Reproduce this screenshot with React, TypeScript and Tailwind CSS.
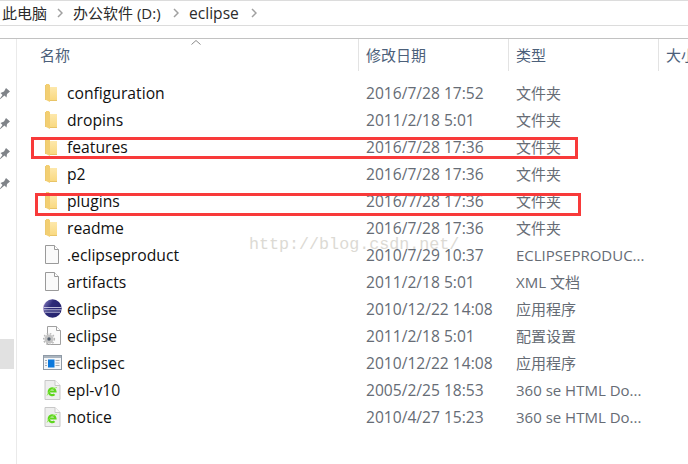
import type { ReactNode } from 'react';

const FONT = "font-['Open_Sans','Noto_Sans_CJK_SC',sans-serif]";

function Folder() {
  return (
    <svg width="14" height="18" viewBox="0 0 14 18">
      <defs>
        <linearGradient id="fold" x1="0" y1="0" x2="0" y2="1">
          <stop offset="0" stopColor="#fde8ac" />
          <stop offset="1" stopColor="#f9d981" />
        </linearGradient>
      </defs>
      <path d="M0 1h5v15H0z" fill="#ecc96f" />
      <path d="M1 0h3l1 2v16l-4-2z" fill="#f3cf72" />
      <path d="M5 3h7v13H5z" fill="url(#fold)" />
      <path d="M5 16.500h7" stroke="#e8c468" />
    </svg>
  );
}

function PlainFile() {
  return (
    <svg width="16" height="19" viewBox="0 0 16 19">
      <path d="M1.500.5h9l4 4v14h-13z" fill="#fafafa" stroke="#9a9a9a" />
      <path d="M10.500.5v4h4" fill="#fff" stroke="#9a9a9a" />
    </svg>
  );
}

function EclipseLogo() {
  return (
    <svg width="19" height="19" viewBox="0 0 19 19">
      <defs>
        <linearGradient id="ecl" x1="0" y1="0" x2="1" y2="0.600">
          <stop offset="0" stopColor="#8f88c8" />
          <stop offset="0.450" stopColor="#2c2a78" />
          <stop offset="1" stopColor="#26246e" />
        </linearGradient>
      </defs>
      <circle cx="9.500" cy="9.500" r="9.200" fill="url(#ecl)" />
      <path d="M1 8.500h17.500M1 10.800h17.500M2 13.200h15" stroke="#dfe0f2" strokeWidth="0.800" />
      <path d="M3 2.800a9.200 9.200 0 0 0 0 13.400a11 11 0 0 1 0-13.400z" fill="#c9a9d8" opacity="0.800" />
    </svg>
  );
}

function ConfigFile() {
  return (
    <svg width="19" height="19" viewBox="0 0 19 19">
      <path d="M4.500.5h9l4 4v14h-13z" fill="#fbfbfb" stroke="#a0a0a0" />
      <path d="M13.500.5v4h4" fill="#fff" stroke="#a0a0a0" />
      <circle cx="6" cy="13" r="4.600" fill="#c4c4c4" />
      <circle cx="6" cy="13" r="5.400" fill="none" stroke="#b5b5b5" strokeWidth="1.400" strokeDasharray="1.600 1.600" />
      <circle cx="6" cy="13" r="1.700" fill="#55606e" />
    </svg>
  );
}

function ExeFile() {
  return (
    <svg width="19" height="16" viewBox="0 0 19 16">
      <rect x="0.500" y="0.500" width="18" height="14" fill="#f4f6f8" stroke="#8f9aa6" />
      <path d="M1 1h17v2H1z" fill="#aab4be" />
      <path d="M5 4.500h6.500v8H5z" fill="#0a78dc" />
      <path d="M12.500 5.500h4M12.500 8h4M12.500 10.500h4M2 5.500h2M2 8h2M2 10.500h2" stroke="#a2a9b2" />
    </svg>
  );
}

function HtmlFile() {
  return (
    <svg width="17" height="20" viewBox="0 0 17 20">
      <path d="M1 .5h10l5 5v14H1z" fill="#eeeeee" stroke="#c8c8c8" />
      <path d="M11 .5v5h5" fill="#fafafa" stroke="#c8c8c8" />
      <path d="M4.500 11.500h7a3.400 3.400 0 1 0-1 2.700" fill="none" stroke="#5ed61e" strokeWidth="2.200" />
      <path d="M3 15.500c2-5 6-7.500 10-8" fill="none" stroke="#8be84a" strokeWidth="0.800" />
    </svg>
  );
}

function Pin() {
  return (
    <svg width="11" height="12" viewBox="0 0 11 12" className="-ml-[1px]">
      <path d="M0 12l3.500-5-2-2 3.500-1.500 2-3.500 4 3.500-3 2.500-.5 3.500-2-2z" fill="#7f8388" />
    </svg>
  );
}

function Chevron() {
  return (
    <svg width="6" height="10" viewBox="0 0 6 10" className="shrink-0">
      <path d="M1 1l4 4-4 4" fill="none" stroke="#a0a0a0" strokeWidth="1.500" />
    </svg>
  );
}

type Row = { icon: ReactNode; name: string; date: string; type: string };

const rows: Row[] = [
  { icon: <Folder />, name: 'configuration', date: '2016/7/28 17:52', type: '文件夹' },
  { icon: <Folder />, name: 'dropins', date: '2011/2/18 5:01', type: '文件夹' },
  { icon: <Folder />, name: 'features', date: '2016/7/28 17:36', type: '文件夹' },
  { icon: <Folder />, name: 'p2', date: '2016/7/28 17:36', type: '文件夹' },
  { icon: <Folder />, name: 'plugins', date: '2016/7/28 17:36', type: '文件夹' },
  { icon: <Folder />, name: 'readme', date: '2016/7/28 17:36', type: '文件夹' },
  { icon: <PlainFile />, name: '.eclipseproduct', date: '2010/7/29 10:37', type: 'ECLIPSEPRODUC...' },
  { icon: <PlainFile />, name: 'artifacts', date: '2011/2/18 5:01', type: 'XML 文档' },
  { icon: <EclipseLogo />, name: 'eclipse', date: '2010/12/22 14:08', type: '应用程序' },
  { icon: <ConfigFile />, name: 'eclipse', date: '2011/2/18 5:01', type: '配置设置' },
  { icon: <ExeFile />, name: 'eclipsec', date: '2010/12/22 14:08', type: '应用程序' },
  { icon: <HtmlFile />, name: 'epl-v10', date: '2005/2/25 18:53', type: '360 se HTML Do...' },
  { icon: <HtmlFile />, name: 'notice', date: '2010/4/27 15:23', type: '360 se HTML Do...' },
];

export default function App() {
  return (
    <div className={`relative flex h-[464px] w-[688px] flex-col overflow-hidden bg-white text-[15px] leading-[20px] ${FONT}`}>
      {/* address bar */}
      <div className="flex h-[26px] shrink-0 items-center border-y border-t-[#dcdcdc] border-b-[#dcdcdc] pl-[2px] text-[#2b2b2b]">
        <span className="w-[55px]">此电脑</span>
        <Chevron />
        <span className="ml-[10px] w-[100px]">办公软件 (D:)</span>
        <Chevron />
        <span className="ml-[10px] w-[62px] text-[15.600px]">eclipse</span>
        <Chevron />
      </div>
      <div className="h-[12px] shrink-0" />

      <div className="flex min-h-0 flex-1 border-t border-t-[#c2c2c2]">
        {/* nav pane sliver */}
        <div className="flex w-[17px] shrink-0 flex-col border-r border-r-[#eaeaea]">
          <div className="mt-[49px] flex flex-col gap-[18px]">
            <Pin />
            <Pin />
            <Pin />
            <Pin />
          </div>
          <div className="mt-[149px] h-[30px] w-[14px] bg-[#e1e1e1]" />
        </div>

        <div className="min-w-0 flex-1">
          {/* column headers */}
          <div className="relative grid h-[32px] grid-cols-[341px_150px_150px_30px] text-[#4c607a]">
            <div className="pl-[23px] pt-[6px]">名称</div>
            <div className="border-l border-l-[#e3e3e3] pl-[7px] pt-[6px]">修改日期</div>
            <div className="border-l border-l-[#e3e3e3] pl-[7px] pt-[6px]">类型</div>
            <div className="overflow-hidden whitespace-nowrap border-l border-l-[#e3e3e3] pl-[7px] pt-[6px]">大小</div>
            <svg width="10" height="5" viewBox="0 0 10 5" className="absolute left-[174px] top-[1px]">
              <path d="M.5 4.500L5 .5l4.500 4" fill="none" stroke="#8a8a8a" />
            </svg>
          </div>

          {/* file rows */}
          <div className="pt-[8px]">
            {rows.map((r, i) => (
              <div key={i} className="grid h-[27px] grid-cols-[341px_150px_150px] items-center">
                <div className="flex items-center">
                  <div className="flex w-[50px] justify-center pl-[20px]">{r.icon}</div>
                  <span className="text-[15.700px] text-[#101010]">{r.name}</span>
                </div>
                <div className="pl-[8px] text-[15.600px] text-[#666c75]">{r.date}</div>
                <div className="whitespace-nowrap pl-[8px] text-[#666c75]">{r.type}</div>
              </div>
            ))}
          </div>
        </div>
      </div>

      {/* red annotation boxes */}
      <div className="absolute left-[31px] top-[137px] h-[22px] w-[547px] border-[3px] border-[#f83a3a]" />
      <div className="absolute left-[35px] top-[193px] h-[23px] w-[546px] border-[3px] border-[#f83a3a]" />

      {/* watermark */}
      <div className="absolute left-[249px] top-[235px] font-['Liberation_Mono',monospace] text-[16.700px] text-[#dcdad4]">
        http://blog.csdn.net/
      </div>
    </div>
  );
}
